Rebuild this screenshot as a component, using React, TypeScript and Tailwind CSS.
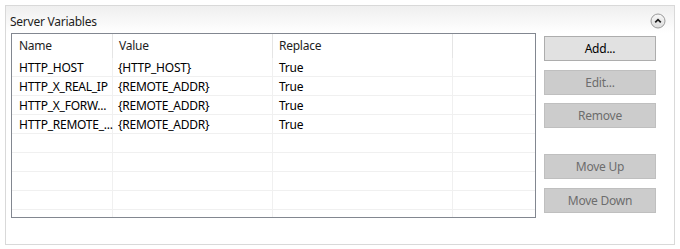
import React from "react";

const rows: [string, string, string][] = [
  ["HTTP_HOST", "{HTTP_HOST}", "True"],
  ["HTTP_X_REAL_IP", "{REMOTE_ADDR}", "True"],
  ["HTTP_X_FORW...", "{REMOTE_ADDR}", "True"],
  ["HTTP_REMOTE_...", "{REMOTE_ADDR}", "True"],
  ["", "", ""],
  ["", "", ""],
  ["", "", ""],
  ["", "", ""],
  ["", "", ""],
];

function Btn({ label, enabled = false }: { label: string; enabled?: boolean }) {
  return (
    <div
      className={
        enabled
          ? "h-[25px] w-[112px] flex items-center justify-center border border-[#adadad] bg-[#e1e1e1] text-[#000000]"
          : "h-[25px] w-[112px] flex items-center justify-center border border-[#bfbfbf] bg-[#cccccc] text-[#6d6d6d]"
      }
    >
      {label}
    </div>
  );
}

export default function App() {
  return (
    <div
      className="w-[680px] h-[249px] bg-white p-[5px] text-[12px] leading-none tracking-[-0.25px]"
      style={{ fontFamily: '"Noto Sans", "Open Sans", sans-serif' }}
    >
      <div className="w-[670px] h-[240px] border border-[#d9d9d9] flex flex-col">
        <div className="h-[27px] shrink-0 flex items-center justify-between pl-[4px] pr-[8px] pt-[4px] bg-gradient-to-b from-[#efefef] to-white">
          <span className="text-[#1e1e1e]">Server Variables</span>
          <svg width="16" height="16" viewBox="0 0 16 16" className="-mt-[2px]">
            <defs>
              <linearGradient id="g" x1="0" y1="0" x2="0" y2="1">
                <stop offset="0" stopColor="#f8f8f8" />
                <stop offset="1" stopColor="#dcdcdc" />
              </linearGradient>
            </defs>
            <circle cx="8" cy="8" r="7" fill="url(#g)" stroke="#9a9a9a" strokeWidth="1" />
            <path d="M5.2 9.4 L8 6.6 L10.8 9.4" fill="none" stroke="#1e1e1e" strokeWidth="1.7" />
          </svg>
        </div>
        <div className="flex pl-[5px] gap-[8px]">
          <div className="w-[525px] h-[185px] border border-[#828790] overflow-hidden bg-white">
            <div className="flex h-[24px] text-[#1e1e1e]">
              <div className="w-[101px] flex items-center pl-[7px] border-r border-[#e5e5e5]">Name</div>
              <div className="w-[160px] flex items-center pl-[6px] border-r border-[#e5e5e5]">Value</div>
              <div className="w-[180px] flex items-center pl-[6px] border-r border-[#e5e5e5]">Replace</div>
              <div className="flex-1" />
            </div>
            {rows.map((r, i) => (
              <div key={i} className="flex h-[19px] border-b border-[#f0f0f0] text-[#000000]">
                <div className="w-[101px] flex items-center pl-[7px] pt-[2px] border-r border-[#f0f0f0] whitespace-nowrap">
                  {r[0]}
                </div>
                <div className="w-[160px] flex items-center pl-[5px] pt-[2px] border-r border-[#f0f0f0] whitespace-nowrap">
                  {r[1]}
                </div>
                <div className="w-[180px] flex items-center pl-[6px] pt-[2px] border-r border-[#f0f0f0]">
                  {r[2]}
                </div>
                <div className="flex-1" />
              </div>
            ))}
          </div>
          <div className="flex flex-col pt-[3px]">
            <Btn label="Add..." enabled />
            <div className="h-[9px]" />
            <Btn label="Edit..." />
            <div className="h-[8px]" />
            <Btn label="Remove" />
            <div className="h-[26px]" />
            <Btn label="Move Up" />
            <div className="h-[9px]" />
            <Btn label="Move Down" />
          </div>
        </div>
      </div>
    </div>
  );
}
